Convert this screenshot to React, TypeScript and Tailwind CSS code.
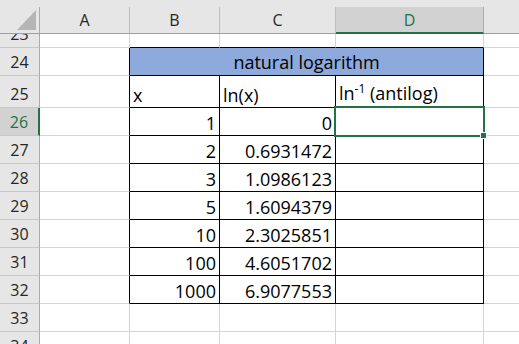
import React from "react";

const cols = [
  { key: "A", w: "w-[90px]" },
  { key: "B", w: "w-[90px]" },
  { key: "C", w: "w-[116px]" },
  { key: "D", w: "w-[148px]" },
  { key: "E", w: "w-[90px]" },
];

const rows = [
  { n: 23, h: "h-[14px]" },
  { n: 24, h: "h-[28px]" },
  { n: 25, h: "h-[32px]" },
  { n: 26, h: "h-[28px]" },
  { n: 27, h: "h-[28px]" },
  { n: 28, h: "h-[28px]" },
  { n: 29, h: "h-[28px]" },
  { n: 30, h: "h-[28px]" },
  { n: 31, h: "h-[28px]" },
  { n: 32, h: "h-[28px]" },
  { n: 33, h: "h-[28px]" },
  { n: 34, h: "h-[28px]" },
];

const data: Record<number, [string, string]> = {
  26: ["1", "0"],
  27: ["2", "0.6931472"],
  28: ["3", "1.0986123"],
  29: ["5", "1.6094379"],
  30: ["10", "2.3025851"],
  31: ["100", "4.6051702"],
  32: ["1000", "6.9077553"],
};

const inTable = (r: number, c: number) => r >= 24 && r <= 32 && c >= 1 && c <= 3;

function cellContent(r: number, c: number) {
  if (r === 25) {
    if (c === 1) return <span>x</span>;
    if (c === 2) return <span>ln(x)</span>;
    if (c === 3)
      return (
        <span>
          ln<span className="relative -top-[7px] text-[12px]">-1</span> (antilog)
        </span>
      );
  }
  if (data[r] && (c === 1 || c === 2)) {
    return <span className="ml-auto">{data[r][c - 1]}</span>;
  }
  return null;
}

export default function App() {
  return (
    <div className="relative w-[519px] h-[344px] overflow-hidden bg-white font-['Open_Sans','Liberation_Sans',sans-serif] text-[#000]">
      {/* column headers */}
      <div className="flex h-[34px] bg-[#e6e6e6] border-b border-[#9e9e9e] pt-[7px] text-[16px] text-[#262626]">
        <div className="relative w-[40px] shrink-0 border-r border-[#ababab]">
          <svg className="absolute left-0 -top-[7px]" width="40" height="34">
            <polygon points="36,10 36,30 17,30" fill="#b5b5b5" />
          </svg>
        </div>
        {cols.map((col) => (
          <div
            key={col.key}
            className={
              col.key === "D"
                ? `${col.w} shrink-0 flex items-center justify-center border-r border-[#ababab] bg-[#d2d2d2] text-[#217346] border-b-2 border-b-[#217346] -mb-[1px] leading-[22px]`
                : `${col.w} shrink-0 flex items-center justify-center border-r border-[#bdbdbd] leading-[22px]`
            }
          >
            {/* column E is cut off at the window edge */}
            {col.key === "E" ? null : col.key}
          </div>
        ))}
      </div>

      {rows.map((row) => (
        <div key={row.n} className={`flex ${row.h}`}>
          <div
            className={
              row.n === 26
                ? "w-[40px] shrink-0 flex items-end justify-center pb-[2px] bg-[#d2d2d2] text-[#217346] border-r-2 border-[#217346] border-b border-b-[#c8c8c8] text-[16px] leading-[22px] overflow-hidden"
                : "w-[40px] shrink-0 flex items-end justify-center pb-[2px] bg-[#e6e6e6] text-[#262626] border-r border-[#ababab] border-b border-b-[#c8c8c8] text-[16px] leading-[22px] overflow-hidden"
            }
          >
            {row.n}
          </div>
          {row.n === 24 ? (
            <>
              <div className="w-[90px] shrink-0 border-r border-b border-r-black border-b-[#d4d4d4]" />
              <div className="w-[354px] shrink-0 flex items-center justify-center bg-[#8ea9db] border-r border-b border-black text-[18px] leading-[24px]">
                natural logarithm
              </div>
              <div className="w-[90px] shrink-0 border-r border-b border-[#d4d4d4]" />
            </>
          ) : (
            cols.map((col, c) => {
              const rightBlack = inTable(row.n, c) || inTable(row.n, c + 1);
              const bottomBlack = inTable(row.n, c) || inTable(row.n + 1, c);
              return (
                <div
                  key={col.key}
                  className={`${col.w} shrink-0 flex items-end px-[3px] border-r border-b text-[18px] leading-[23px] overflow-hidden whitespace-nowrap ${
                    rightBlack ? "border-r-black" : "border-r-[#d4d4d4]"
                  } ${bottomBlack ? "border-b-black" : "border-b-[#d4d4d4]"}`}
                >
                  {cellContent(row.n, c)}
                </div>
              );
            })
          )}
        </div>
      ))}

      {/* active cell D26 */}
      <div className="absolute left-[334px] top-[106px] w-[151px] h-[31px] border-2 border-[#217346]" />
      <div className="absolute left-[480px] top-[132px] w-[7px] h-[7px] bg-[#217346] border border-white" />
    </div>
  );
}
